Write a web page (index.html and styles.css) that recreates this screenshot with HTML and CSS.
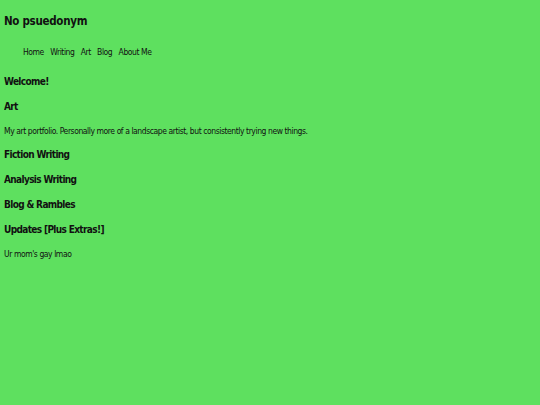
FILE: index.html
```html
<!DOCTYPE html>
<html>
<head>
<meta charset="utf-8">
<link rel="stylesheet" href="styles.css">
</head>
<body>
<header class="site-header">
  <h1 class="site-title">No psuedonym</h1>
  <nav>
    <ul class="nav-list">
      <li>Home</li>
      <li>Writing</li>
      <li>Art</li>
      <li>Blog</li>
      <li>About Me</li>
    </ul>
  </nav>
</header>
<main class="content">
  <h2 class="section-title">Welcome!</h2>
  <h2 class="section-title">Art</h2>
  <p class="section-text">My art portfolio. Personally more of a landscape artist, but consistently trying new things.</p>
  <h2 class="section-title">Fiction Writing</h2>
  <h2 class="section-title">Analysis Writing</h2>
  <h2 class="section-title">Blog &amp; Rambles</h2>
  <h2 class="section-title">Updates [Plus Extras!]</h2>
  <p class="section-text">Ur mom's gay lmao</p>
</main>
</body>
</html>
```
FILE: styles.css
```css
html, body {
  background: #5ee05f;
}
body {
  margin: 4px;
  font-family: "DejaVu Sans Condensed", "DejaVu Sans", sans-serif;
  color: #111;
}
.site-title {
  margin: 9px 0 0;
  font-size: 11.5px;
  line-height: 16px;
  letter-spacing: -0.3px;
  font-weight: bold;
}
.nav-list {
  list-style: none;
  margin: 17px 0 0;
  padding: 0 0 0 19px;
  display: flex;
  gap: 6.3px;
  font-size: 8.5px;
  line-height: 12px;
  letter-spacing: -0.43px;
}
.content {
  display: flex;
  flex-direction: column;
  gap: 11px;
  margin-top: 17px;
}
.section-title {
  margin: 0;
  font-size: 10px;
  line-height: 14px;
  letter-spacing: -0.65px;
  font-weight: bold;
}
.section-text {
  margin: 0;
  font-size: 8.5px;
  line-height: 12px;
  letter-spacing: -0.43px;
}
```
